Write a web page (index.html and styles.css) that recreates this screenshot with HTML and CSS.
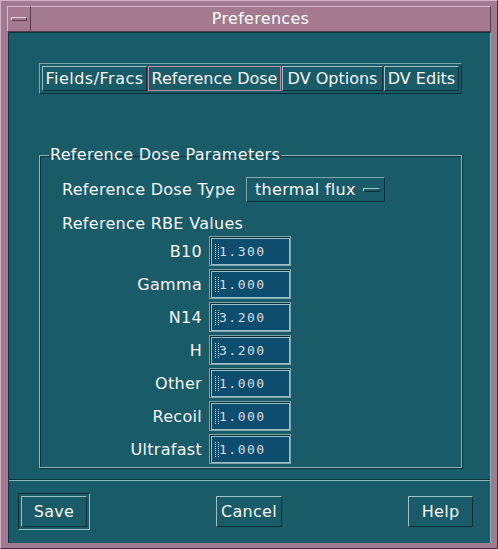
FILE: index.html
```html
<!DOCTYPE html>
<html>
<head>
<meta charset="utf-8">
<link rel="stylesheet" href="styles.css">
</head>
<body>
<div class="window">
  <div class="titlebar">
    <div class="menubtn"><span class="dash"></span></div>
    <div class="title">Preferences</div>
  </div>
  <div class="content">
    <div class="tabs">
      <div class="tab t1">Fields/Fracs</div>
      <div class="tab t2 active">Reference Dose</div>
      <div class="tab t3">DV Options</div>
      <div class="tab t4">DV Edits</div>
    </div>
    <fieldset class="group">
      <legend>Reference Dose Parameters</legend>
      <div class="typerow">
        <span class="lbl">Reference Dose Type</span>
        <div class="option">thermal flux <span class="ind"></span></div>
      </div>
      <div class="rbe">Reference RBE Values</div>
      <div class="grid">
        <span class="rl">B10</span><div class="field"><i class="caret"></i>1.300</div>
        <span class="rl">Gamma</span><div class="field"><i class="caret"></i>1.000</div>
        <span class="rl">N14</span><div class="field"><i class="caret"></i>3.200</div>
        <span class="rl">H</span><div class="field"><i class="caret"></i>3.200</div>
        <span class="rl">Other</span><div class="field"><i class="caret"></i>1.000</div>
        <span class="rl">Recoil</span><div class="field"><i class="caret"></i>1.000</div>
        <span class="rl">Ultrafast</span><div class="field"><i class="caret"></i>1.000</div>
      </div>
    </fieldset>
    <div class="sep"></div>
    <div class="buttons">
      <div class="default"><div class="btn save">Save</div></div>
      <div class="btn cancel">Cancel</div>
      <div class="btn help">Help</div>
    </div>
  </div>
</div>
</body>
</html>
```

FILE: styles.css
```css
html, body {
  margin: 0;
  padding: 0;
  background: #1a5b68;
}
body {
  font-family: "DejaVu Sans", "Liberation Sans", sans-serif;
  font-size: 16px;
  letter-spacing: 0.3px;
  color: #f4f4f4;
}
.window {
  width: 498px;
  height: 549px;
  box-sizing: border-box;
  background: #a07a8e;
  padding: 5px 6px 6px 7px;
  border-left: 1px solid #d4b0c2;
  border-top: 1px solid #d4b0c2;
  border-right: 1px solid #4a2a3a;
  border-bottom: 1px solid #4a2a3a;
  display: flex;
  flex-direction: column;
}
.titlebar {
  height: 26px;
  display: flex;
  align-items: stretch;
  background: #a47a8e;
  margin-left: -1px;
}
.menubtn {
  width: 22px;
  border-top: 1px solid #d8b8c8;
  border-left: 1px solid #d8b8c8;
  border-right: 1px solid #5a3a4a;
  border-bottom: 1px solid #5a3a4a;
  display: flex;
  align-items: center;
  justify-content: center;
}
.dash {
  width: 14px;
  height: 2px;
  border-top: 1px solid #e8d0dc;
  border-bottom: 1px solid #5a3a4a;
  border-left: 1px solid #e8d0dc;
  border-right: 1px solid #5a3a4a;
}
.title {
  flex: 1;
  text-align: center;
  line-height: 24px;
  font-size: 16px;
  color: #ffffff;
  border-top: 1px solid #d8b8c8;
  border-bottom: 1px solid #5a3a4a;
  border-right: 1px solid #5a3a4a;
}
.content {
  flex: 1;
  background: #1a5b68;
  display: flex;
  flex-direction: column;
  border-top: 1px solid #0c3540;
  border-left: 1px solid #0c3540;
  border-right: 1px solid #8fb4bc;
}
.tabs {
  margin: 30px 0 0 30px;
  width: 423px;
  height: 31px;
  box-sizing: border-box;
  display: flex;
  padding: 2px;
  border-top: 1px solid #7ea4ac;
  border-left: 1px solid #7ea4ac;
  border-right: 1px solid #0b2f38;
  border-bottom: 1px solid #0b2f38;
}
.tab {
  box-sizing: border-box;
  height: 25px;
  line-height: 23px;
  text-align: center;
  border-top: 1px solid #9cc0c8;
  border-left: 1px solid #9cc0c8;
  border-right: 1px solid #0b2f38;
  border-bottom: 1px solid #0b2f38;
  margin-right: 1px;
  white-space: nowrap;
  letter-spacing: 0.3px;
  overflow: hidden;
}
.t1 { width: 105px; letter-spacing: 0.5px; }
.t2 { width: 133px; letter-spacing: 0; }
.t3 { width: 101px; letter-spacing: 0; }
.t4 { width: 75px; margin-right: 0; letter-spacing: 0; }
.tab.active {
  border: 1px solid #c08aa6;
  background: #1a5b68;
}
.group {
  margin: 52px 0 0 30px;
  width: 423px;
  height: 322px;
  box-sizing: border-box;
  padding: 0;
  border: 1px solid #8fb0b8;
  box-shadow: inset 1px 1px 0 #0d3540, 1px 1px 0 #0d3540;
  min-inline-size: 0;
}
.group legend {
  padding: 0 1px;
  margin-left: 9px;
  line-height: 18px;
}
.typerow {
  display: flex;
  align-items: center;
  margin: 13px 0 0 22px;
  height: 25px;
}
.lbl { width: 184px; }
.option {
  box-sizing: border-box;
  width: 139px;
  height: 25px;
  line-height: 23px;
  padding-left: 8px;
  border-top: 1px solid #7ea4ac;
  border-left: 1px solid #7ea4ac;
  border-right: 1px solid #0b2f38;
  border-bottom: 1px solid #0b2f38;
  display: flex;
  align-items: center;
  gap: 7px;
  white-space: nowrap;
}
.ind {
  width: 15px;
  height: 2px;
  border-top: 1px solid #a8c4ca;
  border-left: 1px solid #a8c4ca;
  border-bottom: 1px solid #0b2f38;
  border-right: 1px solid #0b2f38;
}
.rbe {
  margin: 13px 0 0 22px;
  line-height: 18px;
}
.grid {
  display: grid;
  grid-template-columns: 140px 82px;
  column-gap: 7px;
  row-gap: 3px;
  margin: 3px 0 0 22px;
  align-items: center;
}
.rl {
  text-align: right;
}
.field {
  box-sizing: border-box;
  height: 30px;
  background: #0d4e6e;
  border: 1px solid #7ea4ac;
  box-shadow: inset 1px 1px 0 #0b2f38, inset 2px 2px 0 #9cc0c8, inset -1px -1px 0 #9cc0c8;
  font-family: "DejaVu Sans Mono", "Liberation Mono", monospace;
  font-size: 13px;
  letter-spacing: 1.5px;
  color: #d8dde2;
  display: flex;
  align-items: center;
  padding-left: 5px;
}
.caret {
  display: inline-block;
  width: 2px;
  height: 15px;
  border-left: 1px dotted #d0d8e0;
  border-right: 1px dotted #d0d8e0;
  margin-right: 0;
}
.sep {
  margin-top: 11px;
  height: 0;
  border-top: 1px solid #0b2f38;
  border-bottom: 1px solid #8fb4bc;
}
.buttons {
  height: 62px;
  display: flex;
  align-items: center;
  justify-content: space-between;
  padding: 0 17px 2px 9px;
  box-sizing: border-box;
}
.btn {
  box-sizing: border-box;
  height: 31px;
  line-height: 29px;
  text-align: center;
  border-top: 1px solid #9cc0c8;
  border-left: 1px solid #9cc0c8;
  border-right: 1px solid #0b2f38;
  border-bottom: 1px solid #0b2f38;
}
.default {
  padding: 2px;
  border-top: 1px solid #0b2f38;
  border-left: 1px solid #0b2f38;
  border-right: 1px solid #9cc0c8;
  border-bottom: 1px solid #9cc0c8;
}
.save { width: 66px; }
.cancel { width: 66px; }
.help { width: 65px; }
```
